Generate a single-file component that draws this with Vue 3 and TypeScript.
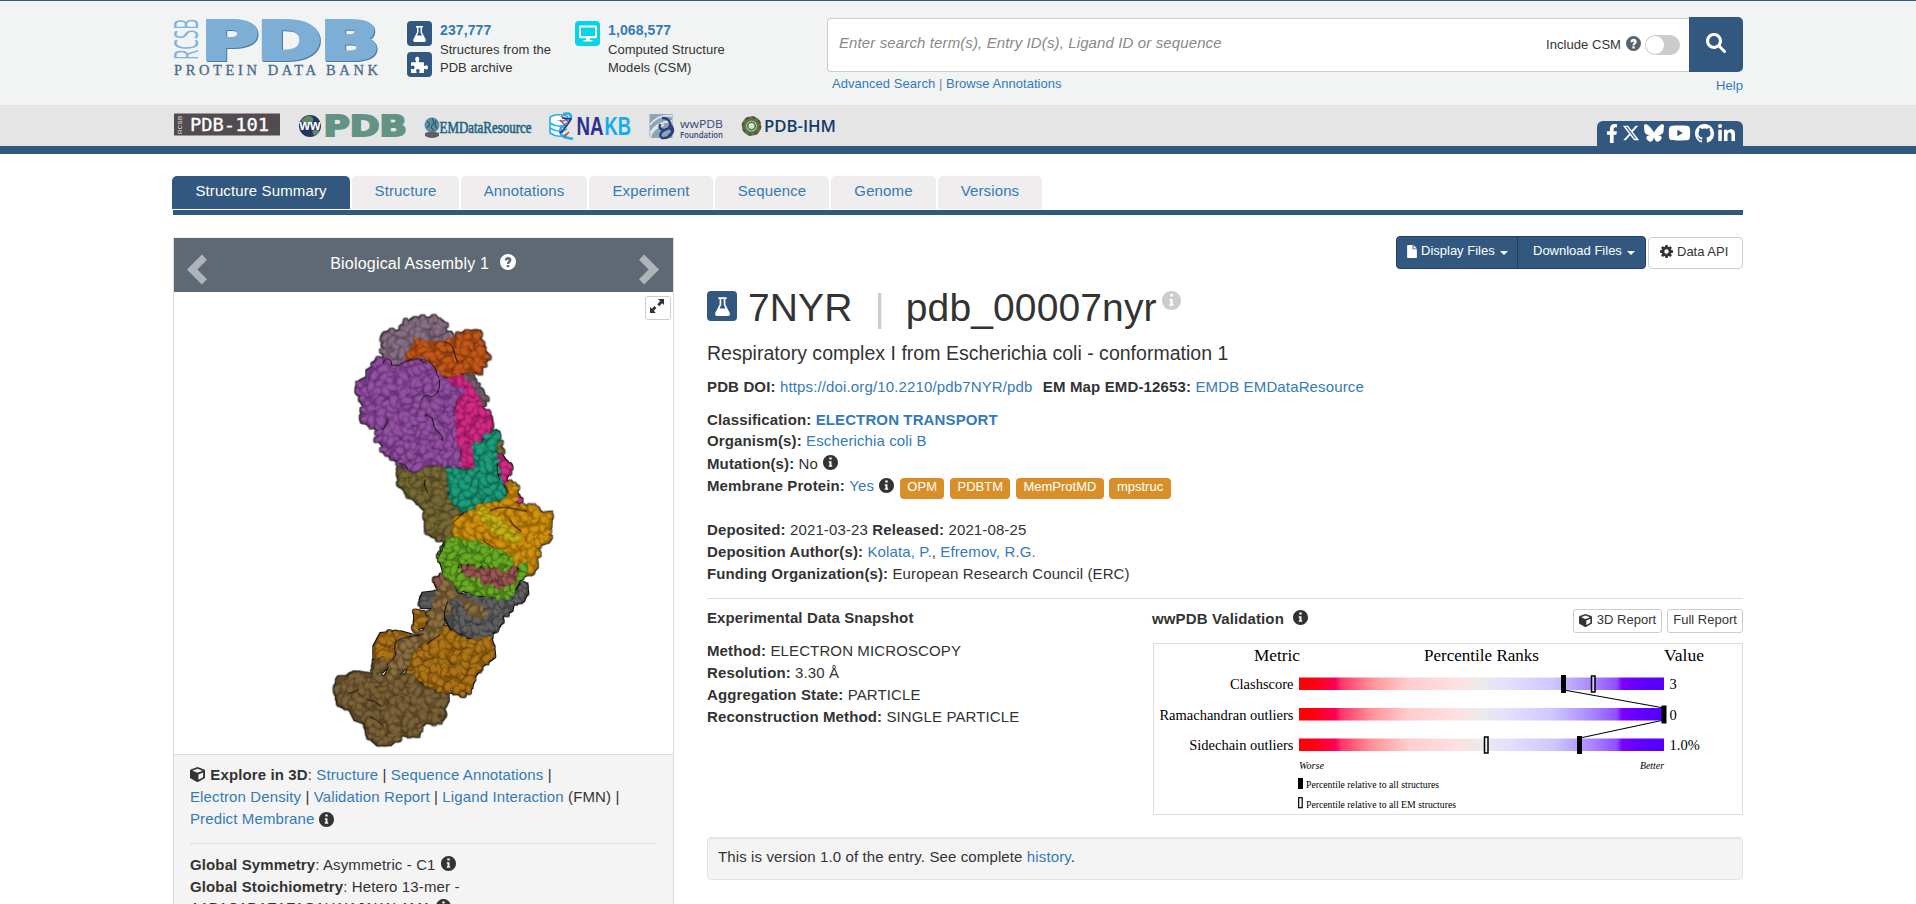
<script setup lang="ts">
import { h } from 'vue'

type IconDef = { box: string; d: string }

const icons: Record<string, IconDef> = {
  facebook: { box: '0 0 320 512', d: 'M279.14 288l14.22-92.66h-88.91v-60.13c0-25.35 12.42-50.06 52.24-50.06h40.42V6.26S260.43 0 225.36 0c-73.22 0-121.08 44.38-121.08 124.72v70.62H22.89V288h81.39v224h100.17V288z' },
  x: { box: '0 0 512 512', d: 'M389.2 48h70.6L305.6 224.2 487 464H345L233.7 318.6 106.5 464H35.8L200.7 275.5 26.8 48H172.4L272.9 180.9 389.2 48zM364.4 421.8h39.1L151.1 88h-42L364.4 421.8z' },
  bluesky: { box: '0 0 512 512', d: 'M111.8 62.2C170.2 105.9 233 194.7 256 242.4c23-47.6 85.8-136.4 144.2-180.2c42.1-31.6 110.3-56 110.3 21.8c0 15.5-8.9 130.5-14.1 149.2C478.2 298 412 314.6 353.1 304.5c102.9 17.5 129.1 75.5 72.5 133.5c-107.4 110.2-154.3-27.6-166.3-62.9c-1.7-4.9-2.6-7.8-3.3-7.8s-1.6 3-3.3 7.8c-12 35.3-59 173.1-166.3 62.9c-56.5-58-30.4-116 72.5-133.5C100 314.6 33.8 298 15.7 233.1C10.4 214.4 1.5 99.4 1.5 83.9c0-77.8 68.2-53.4 110.3-21.8z' },
  youtube: { box: '0 0 576 512', d: 'M549.655 124.083c-6.281-23.65-24.787-42.276-48.284-48.597C458.781 64 288 64 288 64S117.22 64 74.629 75.486c-23.497 6.322-42.003 24.947-48.284 48.597-11.412 42.867-11.412 132.305-11.412 132.305s0 89.438 11.412 132.305c6.281 23.65 24.787 41.5 48.284 47.821C117.22 448 288 448 288 448s170.78 0 213.371-11.486c23.497-6.321 42.003-24.171 48.284-47.821 11.412-42.867 11.412-132.305 11.412-132.305s0-89.438-11.412-132.305zm-317.51 213.508V175.185l142.739 81.205-142.739 81.201z' },
  github: { box: '0 0 16 16', d: 'M8 0C3.58 0 0 3.58 0 8c0 3.54 2.29 6.53 5.47 7.59.4.07.55-.17.55-.38 0-.19-.01-.82-.01-1.49-2.01.37-2.53-.49-2.69-.94-.09-.23-.48-.94-.82-1.13-.28-.15-.68-.52-.01-.53.63-.01 1.08.58 1.23.82.72 1.21 1.87.87 2.33.66.07-.52.28-.87.51-1.07-1.78-.2-3.64-.89-3.64-3.95 0-.87.31-1.59.82-2.15-.08-.2-.36-1.02.08-2.12 0 0 .67-.21 2.2.82.64-.18 1.32-.27 2-.27.68 0 1.36.09 2 .27 1.53-1.04 2.2-.82 2.2-.82.44 1.1.16 1.92.08 2.12.51.56.82 1.27.82 2.15 0 3.07-1.87 3.75-3.65 3.95.29.25.54.73.54 1.48 0 1.07-.01 1.93-.01 2.2 0 .21.15.46.55.38A8.01 8.01 0 0 0 16 8c0-4.42-3.58-8-8-8z' },
  linkedin: { box: '0 0 448 448', d: 'M100.28 448H7.4V148.9h92.88zM53.79 108.1C24.09 108.1 0 83.5 0 53.8a53.79 53.79 0 0 1 107.58 0c0 29.7-24.1 54.3-53.79 54.3zM447.9 448h-92.68V302.4c0-34.7-.7-79.2-48.29-79.2-48.29 0-55.69 37.7-55.69 76.7V448h-92.78V148.9h89.08v40.8h1.3c12.4-23.5 42.69-48.3 87.88-48.3 94 0 111.28 61.9 111.28 142.3V448z' },
  info: { box: '8 8 496 496', d: 'M256 8C119.043 8 8 119.083 8 256c0 136.997 111.043 248 248 248s248-111.003 248-248C504 119.083 392.957 8 256 8zm-40 80h80v66h-80zM312 396h-112v-46h24v-88h-24v-46h88v134h24z' },
  question: { box: '0 0 16 16', d: 'M8 0a8 8 0 1 0 0 16A8 8 0 0 0 8 0zM6.8 11h2.5v2.2H6.800zM9.300 9.900H6.900C6.900 7.900 8.700 7.500 8.700 6.300c0-.9-1.400-1-1.600.3H4.700C4.900 4.200 6.300 3 8.100 3c1.900 0 3.300 1.100 3.300 3 0 2.100-2.100 2.300-2.100 3.900z' },
  flask: { box: '0 0 16 20', d: 'M3.600 0h8.800v2h-1.300v5.800l4.500 8.800c.8 1.700 0 3.400-1.800 3.400H2.200C.4 20-.4 18.300.4 16.600l4.500-8.800V2H3.600zM6.700 2v6.200L4.800 12h6.400L9.300 8.200V2z' },
  puzzle: { box: '0 0 20 20', d: 'M0 7.300h4.900c1.300 0 1.100-1 .6-1.800C4.200 3 5.200.8 7.300.8S10.500 3 9.300 5.300c-.6 1.100-.5 2 .6 2h5.300v3.200c0 1.300.7 1.500 1.700.9 1.500-1 3.100 0 3.100 2s-1.600 3.100-3.100 2.100c-1-.7-1.700-.4-1.700.8V20h-4.700c-1.100 0-1.200-.7-.7-1.600.9-1.500.2-3-1.700-3s-2.700 1.500-1.700 3c.6 1 .3 1.600-.8 1.600H0v-4c0-1.100.6-1.300 1.500-.7 1.500.8 2.700-.3 2.700-1.900s-1.200-2.700-2.700-1.900C.6 12 0 11.700 0 10.800z' },
  desktop: { box: '0 0 20 18', d: 'M1.600 0h16.800c.9 0 1.600.7 1.600 1.600v11c0 .9-.7 1.600-1.600 1.600H12v1.900h3V18H5v-1.900h3v-1.900H1.600C.7 14.200 0 13.500 0 12.600v-11C0 .7.7 0 1.600 0zM2.200 2.200v9.600h15.600V2.200z' },
  search: { box: '0 0 20 20', d: 'M8 0a8 8 0 1 0 4.500 14.600l5 5a1.300 1.300 0 0 0 1.900 0l.2-.2a1.300 1.300 0 0 0 0-1.900l-5-5A8 8 0 0 0 8 0zm0 3.100a4.900 4.900 0 1 1 0 9.800 4.900 4.900 0 0 1 0-9.800z' },
  cube: { box: '0 0 16 16', d: 'M8 0l7.200 2.600.8 1v8.200L8.600 16H7.400L0 11.800V3.600l.8-1zM8 1.900L2.500 3.900 8 6.100l5.500-2.200zM9 7.900v5.700l5-2.700V5.900z' },
  file: { box: '0 0 12 16', d: 'M1 0h5.700v4.500c0 .5.3.8.8.8H12V15c0 .6-.4 1-1 1H1c-.6 0-1-.4-1-1V1c0-.6.4-1 1-1zM7.800 0L12 4.200H7.800z' },
  gear: { box: '0 0 16 16', d: 'M6.600 0h2.800l.4 2.100 1.200.5L12.700 1.400l2 2-1.300 1.700.5 1.100 2.100.4v2.800l-2.100.4-.5 1.200 1.300 1.700-2 2-1.700-1.300-1.200.5-.4 2.100H6.600l-.4-2.100-1.100-.5-1.800 1.300-2-2L2.600 11l-.5-1.200L0 9.400V6.600l2.100-.4.5-1.100-1.300-1.700 2-2 1.800 1.200 1.100-.5zM8 5.300a2.700 2.700 0 1 0 0 5.400 2.700 2.700 0 0 0 0-5.400z' },
  expand: { box: '0 0 14 14', d: 'M8 0h6v6l-1.800-1.800-3 3-2-2 3-3zM0 8l1.800 1.800 2.700-2.700 2 2-2.700 2.700L5.800 14H0z' },
  left: { box: '0 0 20 30', d: 'M14.800 0L20 5.200 10.400 15 20 24.800 14.800 30 0 15z' },
  right: { box: '0 0 20 30', d: 'M5.200 0L0 5.200 9.600 15 0 24.800 5.200 30 20 15z' },
  caret: { box: '0 0 8 4', d: 'M0 0h8L4 4z' },
}

const Icon = (props: { name: string }) =>
  h('svg', { viewBox: icons[props.name].box, fill: 'currentColor', 'aria-hidden': 'true' }, [
    h('path', { d: icons[props.name].d, 'fill-rule': 'evenodd' }),
  ])
Icon.props = ['name']

const social = ['facebook', 'x', 'bluesky', 'youtube', 'github', 'linkedin']

const tabs = [
  { label: 'Structure Summary', w: 178 },
  { label: 'Structure', w: 107 },
  { label: 'Annotations', w: 126 },
  { label: 'Experiment', w: 124 },
  { label: 'Sequence', w: 114 },
  { label: 'Genome', w: 105 },
  { label: 'Versions', w: 104 },
]

const badges = ['OPM', 'PDBTM', 'MemProtMD', 'mpstruc']

const metrics = [
  { label: 'Clashscore', value: '3', y: 34.5, all: 410.5, em: 440.5 },
  { label: 'Ramachandran outliers', value: '0', y: 65, all: 511, em: null },
  { label: 'Sidechain outliers', value: '1.0%', y: 95.500, all: 426.5, em: 333.5 },
]

/* Protein chains: outline polygons filled with shaded surface bumps. */
type Chain = { id: string; light: string; base: string; dark: string; pts: string }

const chains: Chain[] = [
  { id: 'mauve', light: '#8b7189', base: '#6c5866', dark: '#3c303a', pts: '220,200 222,98 240,92 262,98 285,70 310,56 350,52 400,64 410,98 430,112 430,140 320,150 300,200 250,205' },
  { id: 'mauve', light: '#76606f', base: '#5f4d5a', dark: '#3a3038', pts: '455,225 492,225 495,250 520,275 528,315 505,325 460,260' },
  { id: 'olive', light: '#7a6c36', base: '#5c5228', dark: '#302a12', pts: '260,510 264,496 285,510 320,520 360,500 400,495 415,510 412,580 420,610 450,630 430,665 430,700 400,722 365,710 348,690 343,630 300,588 270,558 272,530' },
  { id: 'olive', light: '#7a6c38', base: '#64592c', dark: '#3c3519', pts: '566,425 576,445 568,465 560,450' },
  { id: 'magenta', light: '#d62c86', base: '#a81c68', dark: '#620c3a', pts: '410,235 430,220 462,225 462,245 485,254 490,272 508,288 516,325 545,350 550,380 530,405 500,430 500,470 495,510 450,500 455,440 432,430 430,345 445,290 440,265' },
  { id: 'magenta', light: '#d62c86', base: '#a81c68', dark: '#620c3a', pts: '555,465 575,462 602,505 588,540 600,560 636,600 628,610 575,545' },
  { id: 'orange', light: '#c65a1c', base: '#98420f', dark: '#582006', pts: '290,165 298,145 318,118 345,124 395,122 405,128 430,112 465,95 500,90 510,98 512,125 522,138 520,150 534,162 531,183 518,190 516,212 500,219 455,220 430,223 405,230 378,225 350,190 280,192' },
  { id: 'purple', light: '#9752a5', base: '#733a83', dark: '#3f1e4a', pts: '197,182 215,172 235,175 242,197 265,197 290,184 325,179 352,184 372,202 380,218 410,237 420,247 435,264 465,264 450,285 435,310 430,345 435,395 432,430 452,440 448,492 430,505 400,493 350,497 320,514 288,511 273,492 243,472 219,453 216,435 204,420 204,395 188,375 154,368 149,350 164,325 149,300 154,290 136,265 149,242 169,232 169,212 192,197' },
  { id: 'teal', light: '#1fa27e', base: '#12795f', dark: '#074234', pts: '412,503 450,507 480,512 495,502 487,440 515,427 530,407 555,389 568,397 566,425 555,450 560,480 562,520 588,580 576,602 520,605 490,625 457,637 430,608 417,590 414,555' },
  { id: 'gray', light: '#636363', base: '#484848', dark: '#242424', pts: '632,852 652,850 654,875 641,903 612,908 607,932 577,948 570,978 541,1008 510,1025 472,1012 422,988 405,950 415,900 440,880 500,890 590,895 620,870' },
  { id: 'gray', light: '#606060', base: '#4c4c4c', dark: '#2b2b2b', pts: '328,903 338,878 382,873 385,885 365,924 333,925' },
  { id: 'gold', light: '#d6950b', base: '#a57006', dark: '#5e3e03', pts: '432,665 457,643 490,628 520,609 580,608 595,575 587,550 600,540 621,562 624,590 610,617 668,619 698,638 726,634 724,680 712,700 727,710 716,727 688,735 681,780 684,800 660,826 640,812 600,785 520,745 440,720 430,690' },
  { id: 'yellow', light: '#c8b618', base: '#9c8c0e', dark: '#5f5506', pts: '498,622 518,616 545,643 580,658 610,692 632,724 622,734 600,727 560,698 530,678' },
  { id: 'rose', light: '#9c5852', base: '#743e3a', dark: '#40201e', pts: '455,795 490,805 620,805 631,835 610,865 580,875 530,855 460,830' },
  { id: 'rose', light: '#985550', base: '#7f4541', dark: '#4c2826', pts: '376,840 392,825 405,860 387,872' },
  { id: 'green', light: '#6cac28', base: '#4c8418', dark: '#274b08', pts: '410,717 445,709 460,722 510,722 530,742 590,757 608,785 600,810 575,813 550,800 500,798 455,788 440,795 458,828 500,842 560,870 612,858 622,835 628,800 652,782 656,808 640,822 616,868 590,897 530,888 500,888 450,868 420,848 398,823 398,810 386,770 402,732' },
  { id: 'ochre', light: '#b07616', base: '#86570e', dark: '#4a2e05', pts: '312,938 343,933 350,960 345,980 312,991' },
  { id: 'ochre', light: '#b07616', base: '#86570e', dark: '#4a2e05', pts: '190,1040 212,999 270,994 303,1003 290,1030 260,1080 210,1090 190,1073' },
  { id: 'ochre', light: '#b07616', base: '#86570e', dark: '#4a2e05', pts: '400,980 470,1018 543,1012 552,1040 556,1070 518,1098 492,1133 487,1163 458,1186 425,1178 395,1178 340,1150 290,1120 300,1070 340,1030' },
  { id: 'brown', light: '#7e6439', base: '#5e4928', dark: '#302512', pts: '188,1080 215,1072 235,1100 215,1118 188,1112' },
  { id: 'brown', light: '#7e6439', base: '#5e4928', dark: '#302512', pts: '78,1138 86,1128 110,1128 132,1114 155,1116 175,1119 218,1128 300,1120 340,1160 390,1185 416,1183 416,1203 400,1222 409,1245 397,1262 365,1271 335,1268 327,1311 275,1307 240,1336 203,1337 169,1305 163,1270 134,1260 119,1230 82,1213 76,1180' },
  { id: 'chain', light: '#8f7144', base: '#6a532d', dark: '#3c2d14', pts: '398,838 430,843 440,880 500,910 526,935 521,957 480,945 450,898 420,898 415,930 402,958 395,988 375,1008 340,1030 320,1045 292,1100 240,1150 220,1140 245,1080 260,1055 262,1022 272,1012 330,1008 352,970 356,945 370,910 372,890 387,870 392,840' },
]

const toPoints = (s: string) => s.split(' ').map((p) => p.split(',').map(Number) as [number, number])

function inside(x: number, y: number, poly: [number, number][]) {
  let hit = false
  for (let i = 0, j = poly.length - 1; i < poly.length; j = i++) {
    const [xi, yi] = poly[i]
    const [xj, yj] = poly[j]
    if (yi > y !== yj > y && x < ((xj - xi) * (y - yi)) / (yj - yi) + xi) hit = !hit
  }
  return hit
}

let seed = 7919
const rand = () => {
  seed = (seed * 16807) % 2147483647
  return seed / 2147483647
}

const surface = chains.map((c, index) => {
  const poly = toPoints(c.pts)
  const xs = poly.map((p) => p[0])
  const ys = poly.map((p) => p[1])
  const bumps: { x: number; y: number; rx: number; ry: number; a: number; k: number }[] = []
  for (let y = Math.min(...ys); y <= Math.max(...ys); y += 16) {
    for (let x = Math.min(...xs); x <= Math.max(...xs); x += 16) {
      const px = x + (rand() - 0.5) * 28
      const py = y + (rand() - 0.5) * 28
      if (inside(px, py, poly)) {
        const edge = [0, 1, 2, 3].some((q) => !inside(px + [11, -11, 0, 0][q], py + [0, 0, 11, -11][q], poly))
        const size = edge ? 0.7 : 1
        bumps.push({ x: px, y: py, rx: (13 + rand() * 10) * size, ry: (10 + rand() * 3) * size, a: rand() * 180, k: rand() })
      }
    }
  }
  bumps.sort((a, b) => a.k - b.k)
  return { ...c, gid: `surf-${c.id}-${index}`, bumps }
})
</script>

<template>
  <div class="page">
    <header class="top">
      <div class="wrap top-row">
        <svg class="logo" viewBox="0 0 206 60">
          <text transform="translate(24 42) rotate(-90)" class="lg-rcsb" textLength="41" lengthAdjust="spacingAndGlyphs">RCSB</text>
          <text x="28" y="40.500" class="lg-pdb" textLength="177" lengthAdjust="spacingAndGlyphs">PDB</text>
          <text x="0" y="56.5" class="lg-sub" textLength="204">PROTEIN DATA BANK</text>
        </svg>
        <div class="stat-icons">
          <span class="sq"><Icon name="flask" class="i-flask" /></span>
          <span class="sq"><Icon name="puzzle" class="i-puzzle" /></span>
        </div>
        <div class="stat stat-a">
          <b>237,777</b>
          <span>Structures from the</span>
          <span>PDB archive</span>
        </div>
        <div class="stat-icons">
          <span class="sq cyan"><Icon name="desktop" class="i-desktop" /></span>
        </div>
        <div class="stat">
          <b>1,068,577</b>
          <span>Computed Structure</span>
          <span>Models (CSM)</span>
        </div>
        <div class="search">
          <div class="search-row">
            <div class="field">
              <span class="ph">Enter search term(s), Entry ID(s), Ligand ID or sequence</span>
              <span class="csm">Include CSM</span>
              <Icon name="question" class="i-q" />
              <span class="toggle"></span>
            </div>
            <button class="go"><Icon name="search" class="i-search" /></button>
          </div>
          <div class="search-links">
            <span class="sl"><a>Advanced Search</a> <i>|</i> <a>Browse Annotations</a></span>
            <a class="help">Help</a>
          </div>
        </div>
      </div>
    </header>

    <div class="band">
      <div class="wrap band-row">
        <svg class="partner p101" viewBox="0 0 106 24">
          <rect x="0" y="0.500" width="106" height="22" fill="#524b50" />
          <text transform="translate(8 21) rotate(-90)" font-family="Liberation Sans" font-size="6" fill="#eee" textLength="18">RCSB</text>
          <text x="16" y="17.5" class="hand" textLength="79" lengthAdjust="spacingAndGlyphs">PDB-101</text>
        </svg>
        <svg class="partner pww" viewBox="0 0 108 26">
          <circle cx="11" cy="13" r="11" fill="#23355f" />
          <path d="M2 8q5-6 9-5t3 5-7 3zM13 18q6-2 7 0t-5 5z" fill="#5f8a6a" />
          <text x="0.500" y="17" font-family="Liberation Sans" font-weight="bold" font-size="14" fill="#fff" textLength="21" lengthAdjust="spacingAndGlyphs">ww</text>
          <text x="24.500" y="23" font-family="DejaVu Sans" font-weight="bold" font-size="27.500" fill="#639384" stroke="#639384" stroke-width="1.800" textLength="83.500" lengthAdjust="spacingAndGlyphs">PDB</text>
        </svg>
        <svg class="partner pem" viewBox="0 0 108 24">
          <circle cx="8" cy="9" r="7.500" fill="#5b8ea3" />
          <path d="M3 5l3 3-3 4M8 2l2 5-3 4 3 4M12 4l-1 5 2 4" stroke="#1f4c62" fill="none" />
          <path d="M1 17q7-3 14 0v3q-7 4-14 0z" fill="#5a5f63" />
          <text x="15.500" y="16.500" font-family="Liberation Serif" font-size="16" fill="#1d6482" stroke="#1d6482" stroke-width="0.600" textLength="92" lengthAdjust="spacingAndGlyphs">EMDataResource</text>
        </svg>
        <svg class="partner pnakb" viewBox="0 0 82 28">
          <g fill="none" stroke="#22aee6" stroke-width="1.600">
            <ellipse cx="10" cy="6" rx="9" ry="3.200" fill="#fff" />
            <path d="M1 6v5q9 6 17 1M1 11v5q9 6 17 1M1 16v5q9 6 17 1" fill="#fff" />
            <path d="M14 2q8-2 8 3t-10 11q-3 5 3 9l9 2" stroke-width="2.500" />
          </g>
          <path d="M12 4l8 6M11 8l6 6M16 15l-3 6M20 20l-5 5" stroke="#d43a3a" stroke-width="1.500" />
          <path d="M13 6l9 1q-4 8-11 14" stroke="#26318f" stroke-width="1.500" fill="none" />
          <text x="27.500" y="22.500" font-family="Liberation Sans" font-weight="bold" font-size="25" fill="#2c3192" textLength="27" lengthAdjust="spacingAndGlyphs">NA</text>
          <text x="55.500" y="22.500" font-family="Liberation Sans" font-weight="bold" font-size="25" fill="#12adf0" textLength="26.500" lengthAdjust="spacingAndGlyphs">KB</text>
        </svg>
        <svg class="partner pfound" viewBox="0 0 76 28">
          <rect x="0.500" y="1" width="23" height="24" fill="#8ea6b4" />
          <path d="M1 12q8-11 22-9M1 20Q8 9 23 8M1 25q2-10 14-13" stroke="#dfe7eb" stroke-width="1.800" fill="none" />
          <path d="M13 5q7 0 8 5t-5 7q-7 0-5-6M22 12q4 6 0 10t-9 3q-4-3 1-7t8-2q3 4-3 7" fill="none" stroke="#2b3f7d" stroke-width="2.300" />
          <text x="31" y="15" font-family="Open Sans" font-size="11.500" fill="#35477d" textLength="43" lengthAdjust="spacingAndGlyphs">wwPDB</text>
          <text x="31" y="25" font-family="Open Sans" font-weight="600" font-size="8.500" fill="#35477d" textLength="43" lengthAdjust="spacingAndGlyphs">Foundation</text>
        </svg>
        <svg class="partner pihm" viewBox="0 0 97 24">
          <circle cx="10.500" cy="12" r="7.500" fill="none" stroke="#55783c" stroke-width="4.500" />
          <circle cx="10.500" cy="12" r="8.800" fill="none" stroke="#6b3b5c" stroke-width="2" stroke-dasharray="3 4" />
          <circle cx="10.500" cy="12" r="3.800" fill="#d8e6d0" stroke="#48703a" stroke-width="1.500" />
          <text x="23" y="18" font-family="Open Sans" font-weight="600" font-size="17" fill="#123a6b" textLength="72" lengthAdjust="spacingAndGlyphs">PDB-IHM</text>
        </svg>
        <div class="social"><Icon v-for="s in social" :key="s" :name="s" :class="'s-' + s" /></div>
      </div>
    </div>

    <main class="wrap">
      <nav class="tabs">
        <a v-for="(t, i) in tabs" :key="t.label" :class="{ on: i === 0 }" :style="{ width: t.w + 'px' }">{{ t.label }}</a>
      </nav>
      <div class="cols">
        <aside class="panel">
          <div class="panel-head">
            <Icon name="left" class="arrow" />
            <span class="panel-title">Biological Assembly 1 <Icon name="question" class="i-qa" /></span>
            <Icon name="right" class="arrow" />
          </div>
          <div class="viewer">
            <svg class="mol" viewBox="0 0 810 1362">
              <defs>
                <radialGradient v-for="c in surface" :id="c.gid" :key="c.gid" cx="0.450" cy="0.420" r="0.560">
                  <stop offset="0" :stop-color="c.light" />
                  <stop offset="0.450" :stop-color="c.light" stop-opacity="0.850" />
                  <stop offset="0.800" :stop-color="c.base" stop-opacity="0.750" />
                  <stop offset="1" :stop-color="c.dark" stop-opacity="0.500" />
                </radialGradient>
                <filter id="edge" x="-5%" y="-5%" width="110%" height="110%">
                  <feMorphology in="SourceAlpha" operator="dilate" radius="3" result="fat" />
                  <feFlood flood-color="#111" />
                  <feComposite in2="fat" operator="in" result="line" />
                  <feMerge><feMergeNode in="line" /><feMergeNode in="SourceGraphic" /></feMerge>
                </filter>
              </defs>
              <g filter="url(#edge)">
                <g v-for="c in surface" :key="c.gid">
                  <polygon :points="c.pts" :fill="c.base" />
                  <ellipse
                    v-for="(b, i) in c.bumps"
                    :key="i"
                    :rx="b.rx"
                    :ry="b.ry"
                    :transform="`translate(${b.x.toFixed(1)} ${b.y.toFixed(1)}) rotate(${b.a.toFixed(0)})`"
                    :fill="`url(#${c.gid})`"
                  />
                </g>
                <g fill="none" stroke="#16100f" stroke-width="3" stroke-linejoin="round" stroke-linecap="round">
                  <path d="M218 190q10-20 20-12t6 18l22 0 24-13q18-8 35-6t28 6 20 18 6 20l8 12M350 190l-20-8M405 126q14 2 20 12t10 26 8 24" />
                  <path d="M388 240q4 24-8 40t-24 8-22 14M345 345q24 4 24 20t14 30q16 10 14 26M232 360q-4 20-14 28M268 490q18 0 24 16" />
                  <path d="M345 540q-6 20 10 40M562 490q-4 30 8 50M540 632q30-14 60-8t50 10M600 660q12 22 34 34" />
                  <path d="M432 665l28-26M386 770l18-38M520 722l30 20M413 905q-14 30-8 50t15 28q22 20 48 24" />
                  <path d="M256 1060q-6-30 6-38t38-12 40-8M390 1005l-40 26M240 1085q14-8 18-24M116 1180q16-2 30-12M172 1198q20 2 40 18M180 1250q24 10 40 28" />
                </g>
              </g>
            </svg>
            <button class="expand"><Icon name="expand" class="i-exp" /></button>
          </div>
          <div class="panel-body">
            <div><Icon name="cube" class="i-cube" /> <b>Explore in 3D</b>: <a>Structure</a> | <a>Sequence Annotations</a> |</div>
            <div><a>Electron Density</a> | <a>Validation Report</a> | <a>Ligand Interaction</a> (FMN) |</div>
            <div><a>Predict Membrane</a> <Icon name="info" class="i-info low" /></div>
            <hr />
            <div><b>Global Symmetry</b>: Asymmetric - C1 <Icon name="info" class="i-info" /></div>
            <div class="stoich"><b>Global Stoichiometry</b>: Hetero 13-mer -</div>
            <div class="formula">A1B1C1D1E1F1G1H1I1J1K1L1M1 <Icon name="info" class="i-info" /></div>
          </div>
        </aside>

        <section class="entry">
          <div class="actions">
            <div class="group">
              <button class="g1"><Icon name="file" class="i-file" />Display Files<Icon name="caret" class="i-caret" /></button>
              <button class="g2">Download Files<Icon name="caret" class="i-caret" /></button>
            </div>
            <button class="api"><Icon name="gear" class="i-gear" />Data API</button>
          </div>
          <h1>
            <span class="sq big"><Icon name="flask" class="i-flaskb" /></span>
            <span class="id">7NYR</span><span class="bar">|</span><span>pdb_00007nyr</span>
            <Icon name="info" class="i-gray" />
          </h1>
          <h4>Respiratory complex I from Escherichia coli - conformation 1</h4>
          <div class="ln doi"><b>PDB DOI:</b> <a>https://doi.org/10.2210/pdb7NYR/pdb</a> <b class="em">EM Map EMD-12653:</b> <a>EMDB</a> <a>EMDataResource</a></div>
          <div class="ln cls"><b>Classification:</b> <a><b>ELECTRON TRANSPORT</b></a></div>
          <div class="ln org"><b>Organism(s):</b> <a>Escherichia coli B</a></div>
          <div class="ln"><b>Mutation(s):</b> No <Icon name="info" class="i-info" /></div>
          <div class="ln mem"><b>Membrane Protein:</b>&nbsp;<a>Yes</a>&nbsp;<Icon name="info" class="i-info" /><span v-for="b in badges" :key="b" class="badge">{{ b }}</span></div>
          <div class="ln dep"><b>Deposited:</b> 2021-03-23 <b>Released:</b> 2021-08-25</div>
          <div class="ln"><b>Deposition Author(s):</b> <a>Kolata, P.</a>, <a>Efremov, R.G.</a></div>
          <div class="ln"><b>Funding Organization(s):</b> European Research Council (ERC)</div>
          <div class="split">
            <div class="snapshot">
              <div class="ln head"><b>Experimental Data Snapshot</b></div>
              <div class="ln"><b>Method:</b> ELECTRON MICROSCOPY</div>
              <div class="ln"><b>Resolution:</b> 3.30 Å</div>
              <div class="ln"><b>Aggregation State:</b> PARTICLE</div>
              <div class="ln"><b>Reconstruction Method:</b> SINGLE PARTICLE</div>
            </div>
            <div class="validation">
              <div class="vhead">
                <b>wwPDB Validation</b><Icon name="info" class="i-info vi" />
                <button class="rep"><Icon name="cube" class="i-cubes" />3D Report</button>
                <button class="rep">Full Report</button>
              </div>
              <svg class="chart" viewBox="1 1 588 170">
                <defs>
                  <linearGradient id="rank">
                    <stop offset="0" stop-color="#ff0000" />
                    <stop offset="0.040" stop-color="#ff0010" />
                    <stop offset="0.100" stop-color="#ff0058" />
                    <stop offset="0.115" stop-color="#ff3468" />
                    <stop offset="0.200" stop-color="#ff9396" />
                    <stop offset="0.300" stop-color="#ffcccf" />
                    <stop offset="0.430" stop-color="#ffe0e0" />
                    <stop offset="0.500" stop-color="#ebebeb" />
                    <stop offset="0.580" stop-color="#e2deff" />
                    <stop offset="0.700" stop-color="#ccc6ff" />
                    <stop offset="0.800" stop-color="#ab88ff" />
                    <stop offset="0.870" stop-color="#9050ff" />
                    <stop offset="0.885" stop-color="#7b00ff" />
                    <stop offset="0.950" stop-color="#5c00ff" />
                    <stop offset="1" stop-color="#5500ff" />
                  </linearGradient>
                </defs>
                <g class="ct">
                  <text x="101" y="17.600" textLength="46" lengthAdjust="spacingAndGlyphs">Metric</text>
                  <text x="271" y="17.600" textLength="115" lengthAdjust="spacingAndGlyphs">Percentile Ranks</text>
                  <text x="511" y="17.600" textLength="40" lengthAdjust="spacingAndGlyphs">Value</text>
                </g>
                <path d="M411 47L511 65M511 77L427 95" stroke="#000" stroke-width="1.100" />
                <g v-for="m in metrics" :key="m.label" class="cm">
                  <text x="140.500" :y="m.y + 11.800" text-anchor="end">{{ m.label }}</text>
                  <rect x="146" :y="m.y" width="365" height="12.500" fill="url(#rank)" />
                  <rect v-if="m.em" :x="m.em - 2" :y="m.y - 1.500" width="3.500" height="16" fill="#fff" fill-opacity="0.500" stroke="#000" stroke-width="1.500" />
                  <rect :x="m.all - 2.500" :y="m.y - 2.500" width="5" height="18" fill="#000" />
                  <text x="516.500" :y="m.y + 11.800">{{ m.value }}</text>
                </g>
                <g class="cs">
                  <text x="146" y="125.500" class="ital" textLength="25" lengthAdjust="spacingAndGlyphs">Worse</text>
                  <text x="487" y="125.500" class="ital" textLength="24" lengthAdjust="spacingAndGlyphs">Better</text>
                  <rect x="145" y="135" width="5" height="11" />
                  <text x="153" y="145" textLength="133" lengthAdjust="spacingAndGlyphs">Percentile relative to all structures</text>
                  <rect x="145.700" y="154.700" width="3.500" height="10" fill="#fff" stroke="#000" stroke-width="1.200" />
                  <text x="153" y="164.500" textLength="150" lengthAdjust="spacingAndGlyphs">Percentile relative to all EM structures</text>
                </g>
              </svg>
            </div>
          </div>
          <div class="version">This is version 1.0 of the entry. See complete <a>history</a>.</div>
        </section>
      </div>
    </main>
  </div>
</template>

<style>
body { margin: 0; overflow: hidden; }
</style>

<style scoped>
.page { height: 904px; overflow: hidden; background: #fff; color: #333; font: 15px/22px "Liberation Sans", Arial, sans-serif; letter-spacing: 0.120px; }
.page * { box-sizing: border-box; }
a { color: #337ab7; }
svg { flex: none; }
button { font: inherit; letter-spacing: inherit; margin: 0; padding: 0; display: flex; align-items: center; }
.wrap { width: 1570px; margin-left: 173px; }
.top { height: 105px; border-top: 1px solid #325880; background: #f2f4f4; }
.top-row { display: flex; align-items: flex-start; }
.logo { width: 206px; height: 60px; margin-top: 17px; margin-left: 1px; overflow: visible; letter-spacing: 0; }
.lg-rcsb { font: 32px "Open Sans"; fill: #7fb2de; }
.lg-pdb { font: bold 52px "DejaVu Sans"; fill: #7caed6; stroke: #7caed6; stroke-width: 4; filter: drop-shadow(1px 1px 0 #4b79a4); }
.lg-sub { font: 14.5px "Liberation Serif"; fill: #466a8a; stroke: #466a8a; stroke-width: 0.3; }
.stat-icons { margin: 20px 8px 0 27px; display: flex; flex-direction: column; gap: 6px; }
.sq { width: 25px; height: 25px; border-radius: 4px; background: #325880; color: #fff; display: flex; align-items: center; justify-content: center; }
.cyan { background: #06d3ec; }
.i-flask { width: 13px; height: 16px; }
.i-puzzle { width: 17px; height: 17px; }
.i-desktop { width: 18px; height: 17px; }
.stat { display: flex; flex-direction: column; font-size: 13px; line-height: 18px; margin-top: 19px; width: 115px; white-space: nowrap; letter-spacing: 0.030px; }
.stat-a { width: 108px; }
.stat b { color: #337ab7; font-size: 14px; line-height: 20px; height: 21px; letter-spacing: 0.1px; }
.search { margin-left: auto; width: 916px; margin-top: 16px; }
.search-row { display: flex; height: 55px; align-items: center; }
.field { flex: 1; height: 54px; border: 1px solid #ccc; border-right: 0; border-radius: 4px 0 0 4px; background: #fff; display: flex; align-items: center; padding: 0 9px 0 11px; }
.ph { font-style: italic; color: #888; flex: 1; margin-top: -3px; }
.csm { font-size: 13px; letter-spacing: 0.050px; }
.i-q { width: 15px; height: 15px; color: #56636d; margin: -2px 4px 0 5px; }
.toggle { width: 35px; height: 20px; border-radius: 10px; background: #ccc; display: flex; align-items: center; padding-left: 1px; margin-top: 1px; }
.toggle::before { content: ""; width: 18px; height: 18px; border-radius: 50%; background: #fff; }
.go { width: 54px; height: 55px; border: 0; border-radius: 0 5px 5px 0; background: #325880; color: #fff; justify-content: center; }
.i-search { width: 20px; height: 20px; margin-top: -4px; }
.search-links { display: flex; justify-content: space-between; font-size: 13px; padding-left: 5px; line-height: 22px; letter-spacing: 0.040px; }
.search-links i { font-style: normal; color: #888; }
.sl { margin-top: 1px; }
.help { margin-top: 3px; }
.band { height: 49px; background: #e5e5e5; border-bottom: 8px solid #325880; }
.band-row { display: flex; height: 41px; align-items: flex-start; }
.partner { margin-top: 8px; letter-spacing: 0; overflow: visible; }
.p101 { width: 106px; height: 24px; margin-left: 1px; }
.hand { font: 18px "DejaVu Sans Mono"; fill: #fff; stroke: #fff; stroke-width: 0.3; }
.pww { width: 108px; height: 26px; margin-left: 19px; }
.pem { width: 108px; height: 24px; margin-left: 17px; margin-top: 11px; }
.pnakb { width: 82px; height: 28px; margin-left: 17px; margin-top: 7px; }
.pfound { width: 76px; height: 28px; margin-left: 18px; }
.pihm { width: 97px; height: 24px; margin-left: 16px; margin-top: 9px; }
.social { margin-left: auto; margin-top: 16px; width: 146px; height: 25px; border-radius: 6px 6px 0 0; background: #325880; color: #fff; display: flex; align-items: center; justify-content: space-between; padding: 0 8px 1px 9px; }
.s-facebook { width: 12px; height: 19px; }
.s-x { width: 18px; height: 18px; }
.s-bluesky { width: 20px; height: 20px; }
.s-youtube { width: 23px; height: 20px; }
.s-github { width: 19px; height: 19px; }
.s-linkedin { width: 17px; height: 17px; margin-top: -2px; }
.tabs { display: flex; gap: 2px; margin: 22px 0 0 -1px; height: 34px; }
.tabs a { height: 33px; border-radius: 5px 5px 0 0; background: #efedee; text-align: center; line-height: 30px; }
.tabs .on { background: #325880; color: #fff; }
.cols { border-top: 5px solid #325880; display: flex; }
.panel { width: 501px; margin-top: 22px; border: 1px solid #ddd; border-top-color: #eee; flex: none; height: 700px; background: #fff; }
.panel-head { height: 54px; background: #5f6973; color: #fff; display: flex; justify-content: space-between; padding: 0 14px 0 13px; font-size: 16px; }
.arrow { width: 20px; height: 31px; color: #afb4b9; margin-top: 16px; }
.panel-title { margin-top: 15px; letter-spacing: 0.200px; }
.i-qa { width: 16px; height: 16px; margin-left: 6px; vertical-align: -1px; }
.viewer { height: 462px; display: flex; justify-content: space-between; padding: 8px 2px 0 136px; }
.mol { width: 270px; height: 454px; }
.expand { width: 26px; height: 24px; border: 1px solid #ccc; border-radius: 3px; background: #fff; color: #333; justify-content: center; margin-top: -4px; }
.i-exp { width: 14px; height: 14px; margin: -5px 2px 0 0; }
.panel-body { background: #f4f4f4; border-top: 1px solid #ddd; padding: 9px 16px 0; height: 190px; white-space: nowrap; }
.panel-body hr { border: 0; border-top: 1px solid #ddd; margin: 13px 0 10px; }
.i-cube { width: 15px; height: 15px; vertical-align: -2px; margin-right: 1px; }
.i-info { width: 15px; height: 15px; vertical-align: -1px; margin-left: 1px; }
.low { vertical-align: -3px; margin-left: 0; }
.stoich { height: 21px; }
.formula { letter-spacing: 0.250px; }
.entry { margin-left: 33px; flex: 1; margin-top: 21px; }
.actions { display: flex; justify-content: flex-end; font-size: 13px; letter-spacing: 0; }
.group { display: flex; height: 33px; border: 1px solid #1d3f63; border-radius: 4px; background: #325880; width: 250px; }
.group button { background: none; border: 0; color: #fff; padding-bottom: 3px; }
.group .g1 { width: 121px; border-right: 1px solid #1d3f63; padding-left: 10px; }
.group .g2 { padding-left: 15px; }
.i-file { width: 10px; height: 13px; margin-right: 4px; }
.i-caret { width: 8px; height: 4px; margin: 4px 0 0 5px; }
.api { width: 95px; height: 32px; margin: 1px 0 0 2px; border: 1px solid #ccc; border-radius: 4px; background: #fff; color: #333; padding: 0 0 3px 11px; }
.i-gear { width: 13px; height: 13px; margin-right: 4px; }
h1 { margin: 17px 0 0; font: 39px/44px "Liberation Sans"; display: flex; letter-spacing: 0.120px; height: 44px; }
.big { width: 30px; height: 30px; margin: 5px 11px 0 0; }
.i-flaskb { width: 15px; height: 19px; }
.bar { color: #ccc; margin: 0 21px 0 22px; }
.i-gray { width: 19px; height: 19px; color: #ccc; margin: 5px 0 0 5px; }
h4 { margin: 11px 0 0; font: 19.5px/24px "Liberation Sans"; letter-spacing: 0.020px; }
.ln { height: 22px; white-space: nowrap; }
.doi { margin-top: 11px; letter-spacing: 0.140px; }
.em { margin-left: 6px; }
.cls { margin-top: 11px; height: 21px; }
.org { height: 23px; }
.mem { display: flex; }
.mem .i-info { margin-top: 3px; }
.badge { height: 21px; margin: 3px 0 0 5.5px; background: #d98f29; color: #fff; border-radius: 4px; padding: 0 7.5px; font-size: 13px; line-height: 17px; letter-spacing: 0; }
.dep { margin-top: 22px; }
.split { margin-top: 13px; border-top: 1px solid #ddd; display: flex; height: 239px; }
.snapshot { width: 445px; padding-top: 8px; }
.head { height: 33px; }
.validation { width: 591px; }
.vhead { display: flex; height: 34px; margin-top: 10px; }
.vhead b { margin-top: -1px; }
.vi { margin: 1px auto 0 9px; }
.rep { height: 24px; border: 1px solid #ccc; border-radius: 3px; background: #fff; color: #333; font-size: 13px; padding: 0 5px 2px; margin-left: 5px; letter-spacing: 0.020px; }
.i-cubes { width: 13px; height: 13px; margin-right: 5px; }
.chart { display: block; width: 590px; height: 172px; margin-left: 1px; border: 1px solid #ddd; font-family: "Liberation Serif"; letter-spacing: 0; }
.ct { font-size: 16px; }
.cm { font-size: 14.5px; }
.cs { font-size: 10px; }
.ital { font-style: italic; }
.version { height: 43px; background: #f4f4f4; border: 1px solid #e3e3e3; border-radius: 4px; padding: 8px 10px; box-shadow: inset 0 1px 1px rgba(0, 0, 0, 0.05); }
</style>
